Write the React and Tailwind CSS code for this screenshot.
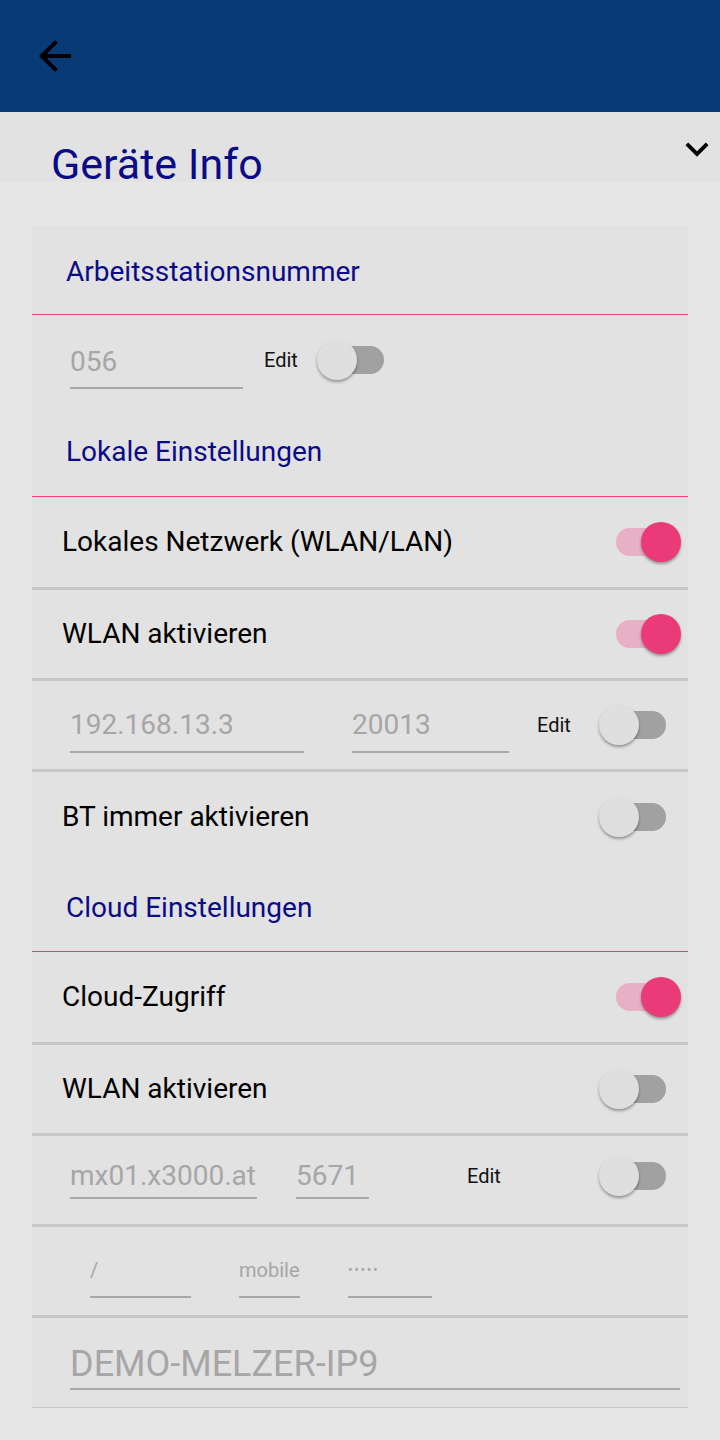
import React from "react";

function Switch({ on }) {
  return (
    <div className="relative w-[82px] h-[40px] shrink-0">
      <div
        className={
          on
            ? "absolute left-[17px] top-[6px] w-[50px] h-[28px] rounded-full bg-[#e8b0c5]"
            : "absolute left-[17px] top-[6px] w-[50px] h-[28px] rounded-full bg-[#a1a1a1]"
        }
      />
      <div
        className={
          on
            ? "absolute left-[42px] top-0 w-[40px] h-[40px] rounded-full bg-[#ea3a77] shadow-[0_2px_3px_rgba(0,0,0,0.35)]"
            : "absolute left-0 top-0 w-[40px] h-[40px] rounded-full bg-[#dfdfdf] shadow-[0_2px_3px_rgba(0,0,0,0.35)]"
        }
      />
    </div>
  );
}

function Heading({ children, h, line = "border-[#ef4079]" }) {
  return (
    <div className={`${h} flex items-center pt-[3px] pl-[34px] border-b ${line} text-[28px] text-[#0b0b8a]`}>
      {children}
    </div>
  );
}

function ToggleRow({ label, on, h = "h-[88px]", last }) {
  return (
    <div
      className={`${h} flex items-center pl-[30px] pr-[7px] ${last ? "" : "border-b-[3px] border-[#c6c6c6]"}`}
    >
      <span className="text-[28px] text-black">{label}</span>
      <div className="ml-auto">
        <Switch on={on} />
      </div>
    </div>
  );
}

function Edit() {
  return <span className="text-[20px] text-[#111]">Edit</span>;
}

export default function App() {
  return (
    <div className="min-h-[1440px] bg-[#e6e6e6] font-['Roboto',sans-serif]">
      {/* toolbar */}
      <div className="h-[112px] bg-[#083a75] flex items-center pl-[31px]">
        <svg width="48" height="48" viewBox="0 0 24 24" fill="#000">
          <path d="M20 11H7.83l5.59-5.59L12 4l-8 8 8 8 1.41-1.41L7.83 13H20v-2z" />
        </svg>
      </div>

      {/* title band */}
      <div className="h-[70px] bg-[#e2e2e2] flex justify-between">
        <h1 className="pl-[51px] pt-[27px] text-[43px] leading-[50px] text-[#0b0b8a]">Geräte Info</h1>
        <svg className="mt-[14px] shrink-0" width="46" height="46" viewBox="0 0 24 24" fill="#000">
          <path d="M16.59 8.59L12 13.17 7.41 8.59 6 10l6 6 6-6z" />
        </svg>
      </div>

      <div className="mx-[32px] mt-[44px] bg-[#e2e2e2]">
        <Heading h="h-[89px]">Arbeitsstationsnummer</Heading>

        <div className="h-[90px] flex items-center pl-[38px]">
          <div className="w-[173px] pt-[13px] pb-[8px] border-b-2 border-[#a8a8a8] text-[28px] leading-[34px] text-[#a6a6a6]">
            056
          </div>
          <div className="ml-[21px] mr-[19px]">
            <Edit />
          </div>
          <Switch on={false} />
        </div>

        <Heading h="h-[92px]">Lokale Einstellungen</Heading>

        <ToggleRow label="Lokales Netzwerk (WLAN/LAN)" on h="h-[93px]" />
        <ToggleRow label="WLAN aktivieren" on h="h-[91px]" />

        <div className="h-[91px] flex items-center pl-[38px] pr-[7px] border-b-[3px] border-[#c6c6c6]">
          <div className="w-[234px] pt-[11px] pb-[9px] border-b-2 border-[#a8a8a8] text-[28px] leading-[34px] text-[#a6a6a6]">
            192.168.13.3
          </div>
          <div className="ml-[48px] w-[157px] pt-[11px] pb-[9px] border-b-2 border-[#a8a8a8] text-[28px] leading-[34px] text-[#a6a6a6]">
            20013
          </div>
          <div className="ml-[28px]">
            <Edit />
          </div>
          <div className="ml-auto">
            <Switch on={false} />
          </div>
        </div>

        <ToggleRow label="BT immer aktivieren" on={false} h="h-[90px]" last />

        <Heading h="h-[90px]" line="border-[#d44a75]">
          Cloud Einstellungen
        </Heading>

        <ToggleRow label="Cloud-Zugriff" on h="h-[93px]" />
        <ToggleRow label="WLAN aktivieren" on={false} h="h-[91px]" />

        <div className="h-[91px] flex items-center pb-[8px] pl-[38px] pr-[7px] border-b-[3px] border-[#c6c6c6]">
          <div className="w-[187px] pt-[6px] pb-[4px] border-b-2 border-[#a8a8a8] text-[28px] leading-[34px] text-[#a6a6a6]">
            mx01.x3000.at
          </div>
          <div className="ml-[39px] w-[73px] pt-[6px] pb-[4px] border-b-2 border-[#a8a8a8] text-[28px] leading-[34px] text-[#a6a6a6]">
            5671
          </div>
          <div className="ml-[98px]">
            <Edit />
          </div>
          <div className="ml-auto">
            <Switch on={false} />
          </div>
        </div>

        <div className="h-[91px] flex items-center pl-[58px] border-b-[3px] border-[#c6c6c6]">
          <div className="w-[101px] pt-[14px] pb-[14px] border-b-2 border-[#a8a8a8] text-[20px] leading-[24px] text-[#a6a6a6]">
            /
          </div>
          <div className="ml-[48px] w-[61px] pt-[14px] pb-[14px] border-b-2 border-[#a8a8a8] text-[20px] leading-[24px] text-[#a6a6a6]">
            mobile
          </div>
          <div className="ml-[48px] w-[84px] pt-[14px] pb-[14px] border-b-2 border-[#a8a8a8] text-[14px] leading-[24px] tracking-[1.5px] text-[#a6a6a6]">
            •••••
          </div>
        </div>

        <div className="h-[90px] flex items-center pl-[38px] pr-[8px] border-b border-[#c8c8c8]">
          <div className="w-full pt-[8px] pb-[3px] border-b-2 border-[#a8a8a8] text-[36px] leading-[42px] text-[#a6a6a6]">
            DEMO-MELZER-IP9
          </div>
        </div>
      </div>
    </div>
  );
}
